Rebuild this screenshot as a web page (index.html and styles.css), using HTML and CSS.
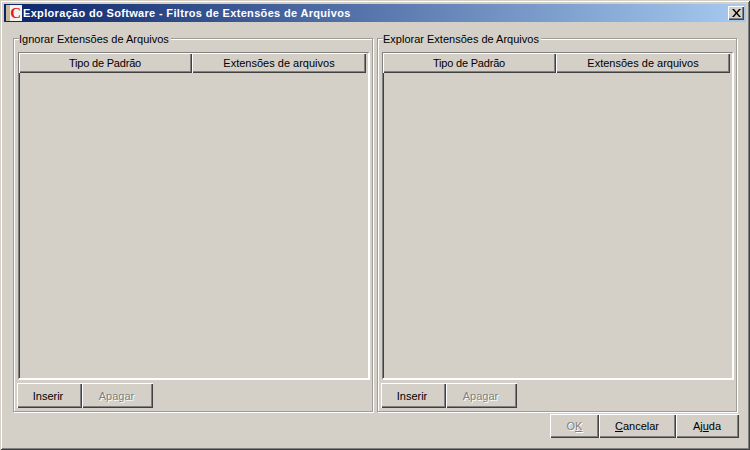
FILE: index.html
```html
<!DOCTYPE html>
<html lang="pt">
<head>
<meta charset="utf-8">
<title>Exploração do Software</title>
<link rel="stylesheet" href="styles.css">
</head>
<body>
<div class="window">
  <div class="titlebar">
    <span class="app-icon"><span class="app-icon-c">C</span></span>
    <span class="title">Exploração do Software - Filtros de Extensões de Arquivos</span>
    <button class="close" type="button" aria-label="Fechar">
      <svg width="9" height="8" viewBox="0 0 9 8"><path d="M0 0h2l2.500 3 2.500-3h2L5.500 4 9 8H7L4.500 5 2 8H0l3.500-4z" fill="#000"/></svg>
    </button>
  </div>
  <div class="groups">
    <fieldset class="group">
      <legend class="legend">Ignorar Extensões de Arquivos</legend>
      <div class="table">
        <div class="thead">
          <div class="th th-first">Tipo de Padrão</div>
          <div class="th th-second">Extensões de arquivos</div>
        </div>
      </div>
      <div class="actions">
        <button class="btn btn-insert" type="button">Inserir</button>
        <button class="btn btn-delete disabled" type="button">Apagar</button>
      </div>
    </fieldset>
    <fieldset class="group">
      <legend class="legend">Explorar Extensões de Arquivos</legend>
      <div class="table">
        <div class="thead">
          <div class="th th-first">Tipo de Padrão</div>
          <div class="th th-second">Extensões de arquivos</div>
        </div>
      </div>
      <div class="actions">
        <button class="btn btn-insert" type="button">Inserir</button>
        <button class="btn btn-delete disabled" type="button">Apagar</button>
      </div>
    </fieldset>
  </div>
  <div class="footer">
    <button class="btn btn-ok disabled" type="button">O<u>K</u></button>
    <button class="btn btn-cancel" type="button"><u>C</u>ancelar</button>
    <button class="btn btn-help" type="button">Aj<u>u</u>da</button>
  </div>
</div>
</body>
</html>
```
FILE: styles.css
```css
* { box-sizing: border-box; }
html, body { margin: 0; padding: 0; }
body {
  width: 750px;
  height: 450px;
  overflow: hidden;
  background: #d4d0c8;
  font-family: "Liberation Sans", Arial, sans-serif;
  font-size: 11px;
  color: #000;
}
.window {
  width: 750px;
  height: 450px;
  display: flex;
  flex-direction: column;
  padding: 4px;
  background: #d4d0c8;
  box-shadow: inset 1px 1px 0 #d4d0c8, inset -1px -1px 0 #404040, inset 2px 2px 0 #fff, inset -2px -2px 0 #808080;
}
.titlebar {
  height: 18px;
  flex: none;
  display: flex;
  align-items: center;
  background: linear-gradient(90deg, #0a246a, #a6caf0);
  padding: 0 2px;
}
.app-icon {
  width: 16px;
  height: 16px;
  flex: none;
  display: flex;
  justify-content: flex-end;
  align-items: center;
  background: linear-gradient(90deg, #c8b89a 0, #c8b89a 4px, #f4f2ee 4px);
}
.app-icon-c {
  font-family: "Liberation Serif", serif;
  font-weight: bold;
  font-size: 15px;
  line-height: 16px;
  color: #e8141c;
  margin-right: 1px;
}
.title {
  flex: 1;
  margin-left: 1px;
  font-weight: bold;
  letter-spacing: 0.33px;
  color: #fff;
  white-space: nowrap;
}
.close {
  width: 16px;
  height: 14px;
  flex: none;
  padding: 0;
  display: flex;
  align-items: center;
  justify-content: center;
  background: #d4d0c8;
  border: 0;
  box-shadow: inset 1px 1px 0 #fff, inset -1px -1px 0 #404040, inset -2px -2px 0 #808080;
}
.groups {
  flex: none;
  display: flex;
  gap: 4px;
  margin: 9px 0 0 9px;
  height: 381px;
}
.group {
  width: 360px;
  margin: 0;
  padding: 0 3px 3px;
  min-width: 0;
  display: flex;
  flex-direction: column;
  border: 1px solid #a09d96;
  box-shadow: 1px 1px 0 #fff, inset 1px 1px 0 #fff;
}
.legend {
  padding: 2px 2px 0 0;
  margin-left: 2px;
  line-height: 13px;
  background: #d4d0c8;
}
.table {
  flex: 1;
  margin: 6px 0 0 1px;
  width: 352px;
  border-style: solid;
  border-width: 1px 2px 2px 1px;
  border-color: #808080 #fff #fff #808080;
  box-shadow: inset 1px 0 0 #404040;
}
.thead {
  display: flex;
  height: 20px;
}
.th {
  display: flex;
  align-items: center;
  justify-content: center;
  background: #d4d0c8;
  box-shadow: inset 1px 1px 0 #fff, inset -1px -1px 0 #404040, inset -2px -2px 0 #808080;
}
.th-first { width: 173px; letter-spacing: -0.2px; padding-right: 1px; }
.th-second { width: 174px; }
.actions {
  display: flex;
  margin-top: 3px;
  height: 25px;
  flex: none;
}
.btn {
  height: 25px;
  padding: 0;
  border: 0;
  background: #d4d0c8;
  font: inherit;
  color: #000;
  flex: none;
  box-shadow: inset 1px 1px 0 #fff, inset -1px -1px 0 #404040, inset -2px -2px 0 #808080;
}
.btn u { text-underline-offset: 1px; }
.btn-insert { width: 65px; padding-right: 3px; }
.btn-delete { width: 71px; padding-right: 2px; }
.disabled {
  color: #808080;
  text-shadow: 1px 1px 0 #fff;
}
.footer {
  display: flex;
  justify-content: flex-end;
  margin: 2px 7px 0 0;
}
.footer .btn { height: 24px; }
.btn-ok { width: 49px; }
.btn-cancel { width: 77px; padding-right: 1px; }
.btn-help { width: 63px; padding-right: 1px; }
```
